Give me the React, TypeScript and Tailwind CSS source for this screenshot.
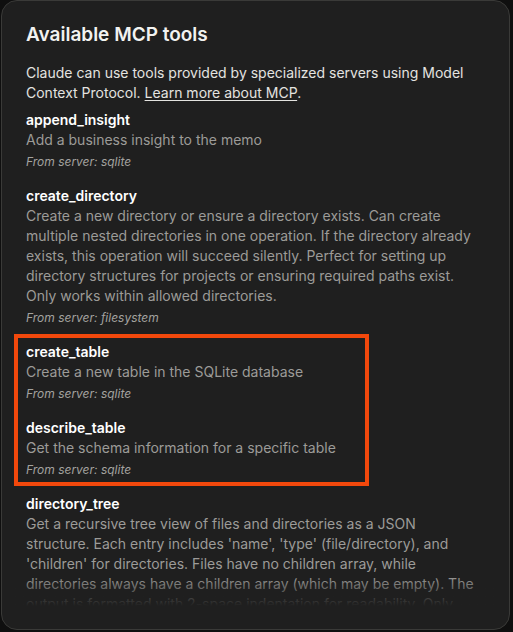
import React from 'react';

type Tool = {
  name: string;
  description: string;
  server: string;
};

const tools: Tool[] = [
  { name: 'append_insight', description: 'Add a business insight to the memo', server: 'sqlite' },
  {
    name: 'create_directory',
    description:
      'Create a new directory or ensure a directory exists. Can create multiple nested directories in one operation. If the directory already exists, this operation will succeed silently. Perfect for setting up directory structures for projects or ensuring required paths exist. Only works within allowed directories.',
    server: 'filesystem',
  },
  { name: 'create_table', description: 'Create a new table in the SQLite database', server: 'sqlite' },
  { name: 'describe_table', description: 'Get the schema information for a specific table', server: 'sqlite' },
  {
    name: 'directory_tree',
    description:
      "Get a recursive tree view of files and directories as a JSON structure. Each entry includes 'name', 'type' (file/directory), and 'children' for directories. Files have no children array, while directories always have a children array (which may be empty). The output is formatted with 2-space indentation for readability. Only works within allowed directories.",
    server: 'filesystem',
  },
];

function ToolItem({ tool }: { tool: Tool }) {
  return (
    <div>
      <div className="text-[14px] leading-5 font-semibold text-white">{tool.name}</div>
      <div className="text-[14px] leading-5 text-[#9c9b98]">{tool.description}</div>
      <div className="mt-1 text-[12px] leading-4 italic text-[#a3a29f]">From server: {tool.server}</div>
    </div>
  );
}

export default function App() {
  return (
    <div className="w-[513px] h-[632px] bg-[#0f0f0f] overflow-hidden" style={{ fontFamily: 'Inter, "Noto Sans", sans-serif' }}>
      <div className="ml-px w-[509px] h-[630px] rounded-2xl border border-[#3a3a38] bg-[#1f1f1f] pl-[24px] pr-[15px] pt-[20px] flex flex-col">
        <h2 className="text-[19px] leading-7 font-semibold text-[#f2f2f0]">Available MCP tools</h2>
        <p className="mt-[14px] text-[14px] leading-5 text-[#e4e3e0] pr-4">
          Claude can use tools provided by specialized servers using Model Context Protocol.{' '}
          <span className="underline underline-offset-2">Learn more about MCP</span>.
        </p>
        <div className="relative mt-[7px] -ml-3 pl-3 h-[496px] overflow-hidden pr-4">
          <div className="flex flex-col gap-4">
            <ToolItem tool={tools[0]} />
            <ToolItem tool={tools[1]} />
            <div className="-ml-3 -my-2 w-[355px] border-4 border-[#f2480c] px-2 py-1 flex flex-col gap-4">
              <ToolItem tool={tools[2]} />
              <ToolItem tool={tools[3]} />
            </div>
            <ToolItem tool={tools[4]} />
          </div>
          <div className="absolute left-0 right-0 bottom-0 h-[30px] bg-gradient-to-b from-transparent to-[#1f1f1f]" />
        </div>
      </div>
    </div>
  );
}
